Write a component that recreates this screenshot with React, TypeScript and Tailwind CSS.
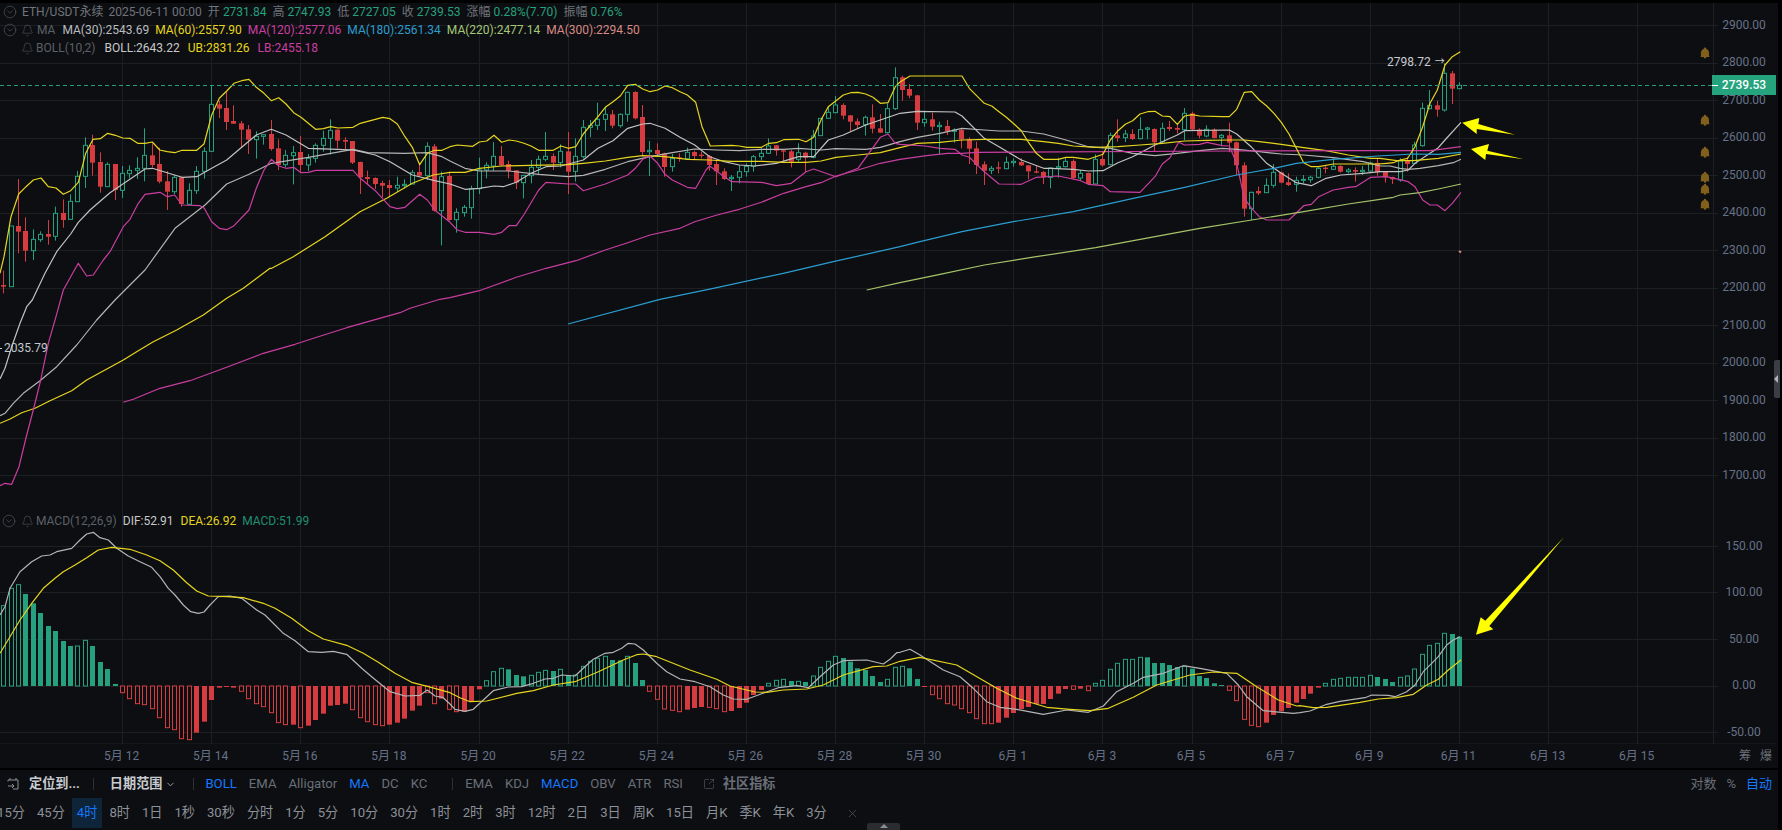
import { Bell, ChevronDown, CircleChevronDown, SquareArrowOutUpRight, X } from "lucide-react";

const BG = "#0d0e11";
const GREEN = "#26a17f";
const RED = "#d63c3f";
const GRID = "#1d1f23";

// zoomed coordinates -> page coordinates
function pts(xOff: number, yOff: number, s: string) {
  return s.split(" ").map((p) => {
    const [a, b] = p.split(",").map(Number);
    return `${(xOff + a / 3).toFixed(1)},${(yOff + b / 3).toFixed(1)}`;
  });
}

const candleChunks: [number, string][] = [
  [60, "r632,675,680,700 g498,498,680,680 r357,498,515,580 r472,513,572,605 g508,538,572,600 g514,523,539,546 r480,522,530,554 g440,460,529,542 r418,459,480,503 g403,424,478,480 g333,349,425,425 g232,256,349,384 r224,255,308,347 r277,306,380,398 g307,313,380,380 r312,312,390,420 g318,340,391,414 g316,331,341,355 g292,325,331,357 g205,286,325,364 r250,286,315,322 r263,312,365,370 r333,364,395,450 g345,352,395,402 r350,352,432,440 g370,391,433,435 g318,334,392,402 g262,274,334,356 g76,133,274,276 r122,133,146,174 r95,144,186,210 r136,183,191,192 r183,190,209,262 r195,208,239,282 g214,229,239,296 g222,224,229,254 r180,222,267,272 r238,265,315,330 g270,286,314,322 g258,278,287,373 r228,276,315,335 g282,295,315,333 g250,256,295,308 g212,235,256,275 g178,211,235,284 r208,209,242,265 r232,240,245,268 r243,243,308,312 r305,306,352,402 r332,351,357,375 r352,354,372,387 r362,369,377,412 r360,375,384,410 g350,376,384,396 g358,373,377,385 g330,338,372,372 r315,336,347,350 g247,259,347,360 r252,259,452,455 g335,350,452,556 r335,348,480,482"],
  [60, "g445,457,479,518 g435,442,458,470 g377,386,443,476 g293,330,386,402 g307,316,330,355 g246,289,318,333 r258,288,316,318 r302,312,333,355 r330,331,368,387 g345,346,368,415 g300,322,347,370 g287,298,322,345 g216,289,298,304 r280,288,308,330 g253,274,308,322 r216,274,335,402 g235,289,334,365 g180,202,290,295 g180,196,202,232 g128,178,196,210 g140,163,178,213 r150,163,197,205 g160,163,197,203 g95,97,163,185 r94,96,175,178 r135,171,276,288 g243,271,275,348 r250,270,282,290 r278,280,321,350 g282,296,320,335 r280,292,294,305 g263,277,296,298 r272,276,288,298 r275,284,288,295 r285,288,315,332 r302,312,334,375 r325,334,357,360 g345,352,356,393 g315,335,352,370 g310,319,335,350 g285,290,319,335 g265,280,290,300 g235,258,280,282 r255,256,272,287 r268,271,275,305 r270,274,305,322 g250,278,298,305 r275,278,293,335 g210,228,292,295 g175,175,227,228 g140,157,175,175 g108,135,158,160 r130,135,167,178 r165,166,185,215 r175,184,195,207 g167,172,194,227 r133,172,206,220 r162,205,218,218 g130,146,218,220 g22,53,146,150"],
  [60, "r47,52,90,122 r72,87,107,115 r105,106,188,210 g152,178,188,200 r158,178,200,212 g185,196,200,283 r180,198,214,225 g205,210,214,248 r205,210,238,265 r232,238,266,312 r245,265,315,342 r304,313,332,375 g318,325,331,342 r305,322,326,340 g290,307,326,328 g295,304,308,320 r295,306,316,318 r315,316,334,358 r318,334,338,340 r333,336,352,372 g322,324,352,385 g293,320,324,353 g295,304,320,322 r298,303,354,360 g330,340,354,362 r338,339,372,375 g283,298,372,372 r275,297,316,320 g218,226,314,316 r178,226,234,245 g210,222,233,246 r208,222,237,240 g172,209,236,238 g200,204,208,238 r205,207,247,275 g188,205,245,250 r183,201,207,213 r190,204,209,220 g144,160,209,240 r155,160,208,210 r205,209,227,235 g196,208,228,232 r205,209,234,235 g222,226,232,255 r188,226,248,277 r245,247,316,345 r307,316,446,470 g395,397,446,480 r380,393,400,405 g355,376,398,398 g312,337,376,383 r335,337,368,370 r340,367,375,378 g350,361,373,395 g345,358,361,370 g347,352,359,368 g322,325,352,355 r318,323,327,340 g295,319,328,330 r316,318,335,338 g324,330,335,340 r322,330,335,365 g318,331,335,345 g305,309,333,335 r295,309,337,347 r335,336,352,368 r350,351,358,372"],
  [0, "g475,483,540,545 r470,481,492,515 g425,435,490,490 g308,325,437,440 g270,316,326,328 r302,316,329,350 g190,220,330,335 r213,220,266,312 g247,256,266,268"],
];

const barChunks: [number, string][] = [
  [510, "h287 h235 h224 f252 f280 f309 f348 f363 f393 f408 h408 h391 f408 f456 f477 f522 h548 h566 h581 h584 h596 h623 h653 h659 h686 h689 f668 f635 f570 f533 f531 f533 h544 h566 h581 h590 h608 h638 h644 f644 h653 f647 f630 f611 f587 f585 f581 h599 h623 h635 h644 h647 f644 f638 f626 f602 f587 h548 h581 f566 h598"],
  [620, "h275 f275 f245 f208 h182 h155 h145 f148 f165 f169 h166 h157 h151 f153 h148 f165 h165 h139 h124 h115 h109 f120 f121 h109 f129 f180 h214 h238 h267 h271 h275 f269 f264 f261 h262 h266 h275 f273 f264 f248 f225 f210 h190 h181 h178 f183 h184 f186 h168 h142 h124 h109 f114 f125 f145 f150 f168 f186 h178 h142"],
  [620, "h139 f145 f177 f201 h224 h236 h251 h255 h266 h278 h296 h311 h311 f308 f293 f279 f267 f261 f252 f252 f237 f221 f207 h208 f206 h212 h190 h181 h148 h130 h118 h118 h112 f112 f129 f129 f135 f141 h139 f146 f168 f174 f190 f195 h211 h242 h298 h316 h320 f308 f285 f274 f264 f248 f237 f221 f203 h190 h178 h175 h172 h172 h172 h166 f171 f177 f186"],
  [620, "h172 h168 h147 h103 h76 h70 h40 f42 f50"],
];

const N = 197;
const candleX = (i: number) => Math.round(1459 - 7.4275 * (N - 1 - i));

const candles = candleChunks.flatMap(([yOff, s]) =>
  s.split(" ").map((t) => {
    const [a, b, c, d] = t.slice(1).split(",").map((v) => yOff + Number(v) / 3);
    return { red: t[0] === "r", wt: a, bt: b, bb: c, wb: d };
  }),
);

const bars = barChunks.flatMap(([yOff, s]) =>
  s.split(" ").map((t) => ({ hollow: t[0] === "h", y: yOff + Number(t.slice(1)) / 3 })),
);

const lines: { color: string; w?: number; points: string[] }[] = [
  {
    color: "#b4b4b4",
    points: [
      ...pts(0, 260, "0,467 15,460 40,430 70,400 120,362 170,320 230,255 290,180 345,120"),
      ...pts(0, 60, "345,720 435,630 525,505 615,435 680,372 747,343 814,310 925,292 1059,268 1103,278 1215,280 1282,278 1326,290 1350,303"),
      ...pts(450, 60, "45,325 88,333 177,333 266,343 355,350 400,346 466,328 533,305 600,290 667,278 734,267 800,270 868,272 934,268 1001,268 1046,265 1113,270 1157,266 1247,268 1291,262 1350,245"),
      ...pts(900, 60, "52,232 120,220 186,205 253,210 297,213 364,213 431,222 498,240 565,260 631,265 698,280 765,287 832,280 899,272 966,265 1010,268 1078,275 1144,282 1211,285 1300,293 1390,305"),
      ...pts(1380, 0, "0,498 30,498 60,505 85,508 120,505 175,497 220,488 243,478"),
    ],
  },
  {
    color: "#c2c2c2",
    points: [
      ...pts(0, 260, "0,357 15,325 35,260 60,190 80,140 97,120"),
      ...pts(0, 60, "97,720 135,640 170,575 212,522 235,487 270,450 330,398 435,327 457,325 546,352 590,350 635,325 680,300 725,262 769,225 814,208 858,225 925,265 1014,268 1059,270 1126,285 1170,305 1237,345 1304,362 1350,372"),
      ...pts(450, 60, "45,388 88,385 132,378 160,380 199,367 243,340 288,320 333,318 400,300 444,265 489,242 533,205 578,192 600,190 645,205 690,232 734,255 779,290 823,305 868,315 912,318 979,310 1046,290 1091,290 1135,240 1180,225 1247,195 1291,180 1350,160"),
      ...pts(900, 60, "52,154 165,156 186,168 253,235 297,260 364,300 431,325 453,325 520,328 565,333 609,332 654,308 698,290 765,255 832,225 854,212 988,210 1010,222 1055,262 1100,310 1144,340 1189,368 1234,377 1278,355 1323,345 1390,340"),
      ...pts(1380, 0, "0,515 60,515 85,510 105,490 150,460 175,443 195,420 243,367"),
    ],
  },
  {
    color: "#e6d51f",
    points: [
      ...pts(0, 260, "0,490 30,477 65,458 105,445 150,422 215,392 260,360 370,300 415,272 460,245 530,210 610,165 680,115 730,85 810,25"),
      ...pts(0, 60, "815,625 880,590 975,530 1080,455 1160,415 1237,370 1300,345 1350,337"),
      ...pts(450, 60, "45,337 88,325 155,318 243,316 355,314 400,310 466,303 533,292 578,287 645,290 712,298 779,300 845,304 934,304 1001,307 1068,307 1113,303 1158,292 1224,285 1291,278 1350,263"),
      ...pts(900, 60, "52,250 120,247 186,240 253,238 364,238 431,245 475,250 520,258 587,262 654,260 720,255 787,250 854,243 921,241 988,240 1033,240 1078,245 1144,253 1211,263 1278,272 1345,285 1412,295"),
      ...pts(1380, 0, "0,475 50,482 100,482 175,475 243,462"),
    ],
  },
  {
    color: "#c93ea0",
    points: [
      ...pts(0, 260, "370,427 400,418 480,385 570,362 680,322 790,280 885,253 950,232 1040,203 1200,158 1230,145 1320,118 1350,113"),
      ...pts(450, 60, "88,692 199,652 288,625 378,602 466,570 533,548 600,525 690,505 734,485 801,465 868,448 934,427 1001,400 1068,380 1113,368 1158,348 1224,330 1291,310 1350,298"),
      ...pts(900, 60, "80,287 142,280 186,280 231,277 1000,273 1350,272"),
      ...pts(1380, 0, "0,452 150,452 243,440"),
    ],
  },
  {
    color: "#c93ea0",
    points: [
      ...pts(0, 260, "0,677 15,670 35,673 57,620 80,525 100,450 122,360 145,250 168,170 190,90 212,50 235,10 260,48 280,45 310,0"),
      ...pts(0, 60, "330,575 370,500 390,478 415,430 435,403 480,397 502,410 524,405 546,435 600,437 613,445 635,485 658,505 680,509 702,497 747,450 769,385 792,330 814,298 836,318 858,325 881,322 903,338 925,337 947,331 970,331 1059,331 1081,355 1126,392 1170,440 1192,446 1215,442 1259,403 1282,420 1304,450 1350,487"),
      ...pts(450, 60, "22,510 45,517 88,517 132,523 155,517 177,497 199,497 221,465 266,390 288,367 355,372 377,372 400,392 466,372 533,345 556,325 578,298 600,288 623,310 645,343 667,360 712,382 737,385 768,330 779,318 823,350 845,365 934,367 979,377 1024,370 1068,335 1091,327 1158,350 1224,325 1291,232 1314,222 1336,250 1350,253"),
      ...pts(900, 60, "75,258 120,265 165,268 186,285 208,292 253,335 297,372 364,373 409,352 475,348 542,362 565,373 609,377 631,395 720,397 765,350 787,312 810,293 836,247 854,255 899,253 921,247 966,257 988,258 1010,310 1033,415 1055,445 1078,470 1100,480 1167,480 1211,437 1234,433 1256,410 1300,390 1345,382 1367,380 1412,352 1457,350"),
      ...pts(1380, 0, "30,532 85,545 105,560 128,600 150,615 172,615 195,632 217,610 243,577"),
    ],
  },
  {
    color: "#e6d51f",
    points: [
      ...pts(0, 60, "0,640 12,590 33,470 56,402 78,380 100,360 123,354 145,380 168,384 190,403 212,392 235,367 257,280 279,238 301,236 323,220 346,226 368,234 390,235 413,250 435,250 457,246 479,270 502,275 524,278 546,271 590,271 612,252 635,165 658,115 680,93 702,70 725,62 747,58 769,82 792,100 814,122 836,113 858,132 881,158 903,172 925,190 947,208 970,206 992,200 1014,204 1059,202 1081,190 1103,184 1126,178 1148,172 1170,176 1192,192 1215,230 1237,262 1259,314 1282,280 1304,271 1326,271 1350,260"),
      ...pts(450, 60, "22,255 68,259 88,246 110,243 132,226 155,247 177,240 199,243 222,250 243,258 266,271 310,271 333,258 355,265 377,260 400,222 422,195 444,170 466,142 489,125 511,108 533,76 556,73 578,87 600,95 623,90 645,78 667,83 690,95 712,105 737,127 756,200 781,258 845,256 868,258 890,262 934,262 957,250 979,248 1001,239 1046,238 1068,245 1091,232 1113,180 1135,140 1158,122 1180,105 1202,98 1224,97 1247,102 1269,112 1291,130 1314,128 1336,80 1350,66"),
      ...pts(900, 60, "30,48 186,48 208,85 253,130 275,138 297,155 319,172 342,192 364,212 386,248 409,280 431,298 475,298 498,292 520,292 565,298 609,283 631,240 654,212 676,193 698,182 720,162 743,155 765,154 787,168 810,170 832,193 854,168 876,164 899,168 966,170 988,170 1010,148 1033,97 1055,95 1078,120 1100,138 1122,160 1144,187 1167,222 1189,265 1211,308 1234,320 1256,320 1300,312 1434,312"),
      ...pts(1380, 0, "20,490 40,488 60,480 83,475 105,440 128,380 150,310 172,270 195,195 217,170 241,155"),
    ],
  },
  {
    color: "#2a9ed0",
    points: [
      ...pts(450, 60, "354,792 630,718 790,685 1000,640 1150,605 1350,560"),
      ...pts(900, 60, "60,545 186,515 340,485 520,455 700,415 854,382 1010,345 1122,325 1189,310 1300,298 1434,288"),
      ...pts(1380, 0, "100,462 175,463 243,457"),
    ],
  },
  {
    color: "#a5c46a",
    points: [
      ...pts(450, 60, "1250,690 1350,668"),
      ...pts(900, 60, "120,643 253,615 409,590 587,563 765,530 899,505 1055,480 1211,455 1345,432"),
      ...pts(1380, 0, "0,598 40,592 60,585 120,578 175,567 243,552"),
    ],
  },
  { color: "#d88a88", w: 2, points: ["1459,251 1461,252.5"] },
  // MACD DIF
  {
    color: "#b4b4b4",
    points: [
      ...pts(0, 510, "0,315 15,290 30,235 60,185 95,155 125,138 150,135 170,125 215,115 240,90 260,72 280,67 300,83 325,90 350,115 385,138 420,155 455,172 480,200 505,235 525,255 550,285 572,305 595,310 612,306 630,285 655,260 690,258 725,265 770,300 795,315 825,345 850,370 885,392 925,425 965,427 1000,424 1040,433 1085,475 1115,500 1170,545 1215,558 1260,556 1282,540 1305,558 1328,562"),
      ...pts(450, 620, "0,252 15,268 45,274 70,268 100,240 130,212 175,201 215,200 250,190 285,177 310,175 335,165 375,168 400,145 430,118 465,100 490,97 515,85 535,70 555,72 580,90 620,130 650,155 690,177 735,185 780,200 820,225 850,237 890,238 925,225 985,203 1040,197 1075,203 1110,170 1150,135 1180,122 1250,120 1300,132 1320,118 1340,98"),
      ...pts(900, 620, "0,97 30,88 60,105 130,150 180,170 220,205 260,245 300,262 350,268 430,283 500,270 565,277 610,258 650,215 700,190 730,172 790,160 850,137 900,145 980,160 1015,195 1040,230 1090,272 1180,280"),
      ...pts(1300, 520, "0,578 30,573 80,553 120,544 195,533 215,525 265,526 285,530 320,515 345,495 370,455 395,430 415,410 440,375 460,360 480,350"),
    ],
  },
  // MACD DEA
  {
    color: "#e6d51f",
    points: [
      ...pts(0, 510, "0,430 30,380 60,330 95,280 130,235 165,205 190,185 225,165 260,143 295,120 335,112 390,118 440,135 480,152 520,180 560,218 590,243 625,258 680,260 730,263 790,280 825,295 875,325 925,362 970,387 1040,406 1090,430 1135,457 1185,490 1235,517 1285,530"),
      ...pts(450, 620, "0,218 30,233 60,245 110,243 200,220 250,212 310,195 375,185 445,155 520,120 560,104 580,102 620,110 720,150 800,178 840,198 915,216 950,217 1000,210 1070,207 1120,195 1180,165 1270,140 1310,138"),
      ...pts(900, 620, "0,124 60,112 170,135 290,205 350,235 440,262 510,268 570,272 625,265 700,232 770,195 870,165 940,156 1010,160 1070,200 1135,240 1190,258"),
      ...pts(1300, 520, "0,557 40,563 80,562 180,547 235,537 290,533 340,523 380,495 415,478 445,450 483,420"),
    ],
  },
];

const arrows = [
  pts(1380, 0, "247,368 298,354 295,372 405,404 290,387 290,402"),
  pts(1380, 0, "273,447 327,432 322,452 432,478 318,462 316,480"),
  pts(1300, 520, "528,344 542,292 556,302 793,50 568,318 580,328"),
];

const priceLabels = [2900, 2800, 2700, 2600, 2500, 2400, 2300, 2200, 2100, 2000, 1900, 1800, 1700];
const macdLabels = ["150.00", "100.00", "50.00", "0.00", "-50.00"];
const gridY = [
  ...priceLabels.map((p) => 25 + (2900 - p) * 0.375),
  546, 592, 639, 686, 732,
];
const gridX = [...Array.from({ length: 18 }, (_, k) => 122 + 89.13 * k), 1712.7];
const dates = [
  "5月 12", "5月 14", "5月 16", "5月 18", "5月 20", "5月 22", "5月 24", "5月 26", "5月 28", "5月 30",
  "6月 1", "6月 3", "6月 5", "6月 7", "6月 9", "6月 11", "6月 13", "6月 15",
];
const bellsY = [52.7, 120, 152, 177, 189, 204];

const indicatorsA = ["BOLL", "EMA", "Alligator", "MA", "DC", "KC"];
const indicatorsB = ["EMA", "KDJ", "MACD", "OBV", "ATR", "RSI"];
const active = ["BOLL", "MA", "MACD"];
const periods = ["15分", "45分", "4时", "8时", "1日", "1秒", "30秒", "分时", "1分", "5分", "10分", "30分", "1时", "2时", "3时", "12时", "2日", "3日", "周K", "15日", "月K", "季K", "年K", "3分"];

function Chart() {
  return (
    <svg className="block h-[741px] w-[1778px]" viewBox="0 3 1778 741">
      {gridX.map((x) => (
        <line key={x} x1={Math.round(x) + 0.5} x2={Math.round(x) + 0.5} y1={3} y2={744} stroke={GRID} />
      ))}
      {gridY.map((y) => (
        <line key={y} x1={0} x2={1718} y1={Math.round(y) + 0.5} y2={Math.round(y) + 0.5} stroke={GRID} />
      ))}
      <line x1={0} x2={1776} y1={744} y2={744} stroke={GRID} />

      {candles.map((c, i) => {
        const x = candleX(i);
        const color = c.red ? RED : GREEN;
        return (
          <g key={i}>
            <line x1={x + 0.5} x2={x + 0.5} y1={c.wt} y2={c.wb} stroke={color} />
            {c.red ? (
              <rect x={x - 2} y={c.bt} width={5} height={Math.max(c.bb - c.bt, 1)} fill={color} />
            ) : (
              <rect x={x - 1.5} y={c.bt} width={4} height={Math.max(c.bb - c.bt, 1)} fill={BG} stroke={color} />
            )}
          </g>
        );
      })}

      {bars.map((b, i) => {
        const x = candleX(i);
        const up = b.y < 686;
        const color = up ? GREEN : RED;
        const top = Math.min(b.y, 686);
        const h = Math.max(Math.abs(b.y - 686), 1);
        return b.hollow ? (
          <rect key={i} x={x - 1.5} y={top} width={4} height={h} fill={BG} stroke={color} />
        ) : (
          <rect key={i} x={x - 2} y={top} width={5} height={h} fill={color} />
        );
      })}

      {lines.map((l, i) => (
        <polyline key={i} points={l.points.join(" ")} fill="none" stroke={l.color} strokeWidth={l.w ?? 1.2} strokeLinejoin="round" />
      ))}

      <line x1={0} x2={1712} y1={85.5} y2={85.5} stroke={GREEN} strokeDasharray="4 3" />
      <line x1={0} x2={2} y1={348.5} y2={348.5} stroke="#c0c8d0" />

      {arrows.map((a, i) => (
        <polygon key={i} points={a.join(" ")} fill="#ffff00" />
      ))}

      {bellsY.map((y) => (
        <g key={y} transform={`translate(1705 ${y})`} fill="#80601a">
          <path d="M-4 3 C-4.4 -1 -3.6 -4 0 -4 C3.6 -4 4.4 -1 4 3 L4.6 4.2 L-4.6 4.2 Z" />
          <circle cx={0} cy={-4} r={1.2} />
          <circle cx={0} cy={4.4} r={1.3} />
        </g>
      ))}
    </svg>
  );
}

function Pair({ k, v, className = "text-[#26a17f]" }: { k: string; v: string; className?: string }) {
  return (
    <div className="flex gap-[3px]">
      <span className="text-[#70747c]">{k}</span>
      <span className={className}>{v}</span>
    </div>
  );
}

function Legend() {
  return (
    <div className="absolute left-[3px] top-0 text-[12px] leading-[18px]">
      <div className="flex h-[18px] items-center">
        <CircleChevronDown size={14} strokeWidth={1} className="text-[#5c6068]" />
        <span className="ml-[5px] text-[#70747c]">ETH/USDT永续</span>
        <span className="ml-[5px] text-[#70747c]">2025-06-11 00:00</span>
        <div className="ml-[6px] flex gap-[6px]">
          <Pair k="开" v="2731.84" />
          <Pair k="高" v="2747.93" />
          <Pair k="低" v="2727.05" />
          <Pair k="收" v="2739.53" />
          <Pair k="涨幅" v="0.28%(7.70)" />
          <Pair k="振幅" v="0.76%" />
        </div>
      </div>
      <div className="flex h-[18px] items-center">
        <CircleChevronDown size={14} strokeWidth={1} className="text-[#5c6068]" />
        <Bell size={13} strokeWidth={1} className="ml-[4px] text-[#5c6068]" />
        <span className="ml-[3px] text-[#5c6068]">MA</span>
        <div className="ml-[7px] flex gap-[6px]">
          <span className="text-[#b8bcc0]">MA(30):2543.69</span>
          <span className="text-[#e6d51f]">MA(60):2557.90</span>
          <span className="text-[#c93ea0]">MA(120):2577.06</span>
          <span className="text-[#2a9ed0]">MA(180):2561.34</span>
          <span className="text-[#a5c878]">MA(220):2477.14</span>
          <span className="text-[#d88a88]">MA(300):2294.50</span>
        </div>
      </div>
      <div className="flex h-[18px] items-center pl-[18px]">
        <Bell size={13} strokeWidth={1} className="text-[#5c6068]" />
        <span className="ml-[2px] text-[#5c6068]">BOLL(10,2)</span>
        <div className="ml-[9px] flex gap-[8px]">
          <span className="text-[#c8c8c8]">BOLL:2643.22</span>
          <span className="text-[#e6d51f]">UB:2831.26</span>
          <span className="text-[#c93ea0]">LB:2455.18</span>
        </div>
      </div>
    </div>
  );
}

function MacdLegend() {
  return (
    <div className="absolute left-[2px] top-[509px] flex h-[18px] items-center text-[12px]">
      <CircleChevronDown size={14} strokeWidth={1} className="text-[#5c6068]" />
      <Bell size={13} strokeWidth={1} className="ml-[5px] text-[#5c6068]" />
      <span className="ml-[2px] text-[#5c6068]">MACD(12,26,9)</span>
      <span className="ml-[6px] text-[#c8c8c8]">DIF:52.91</span>
      <span className="ml-[7px] text-[#e6d51f]">DEA:26.92</span>
      <span className="ml-[6px] text-[#1f8f70]">MACD:51.99</span>
    </div>
  );
}

function PriceAxis() {
  return (
    <div className="absolute left-[1712px] top-0 flex w-[64px] flex-col pt-[3px] text-center text-[12px] text-[#667289]">
      {priceLabels.map((p) => (
        <div key={p} className="flex h-[37.5px] items-center justify-center">{p}.00</div>
      ))}
      <div className="mt-[29px]">
        {macdLabels.map((m) => (
          <div key={m} className="flex h-[46.5px] items-center justify-center">{m}</div>
        ))}
      </div>
    </div>
  );
}

export default function App() {
  return (
    <div className="h-[830px] w-[1782px] overflow-hidden bg-black pt-[3px] font-['Roboto','Noto_Sans_CJK_SC',sans-serif]">
      <div className="relative h-[827px] w-[1778px] bg-[#0d0e11]">
        <div className="relative h-[741px]">
          <Chart />
          <Legend />
          <MacdLegend />
          <PriceAxis />
          <div className="absolute left-[1712px] top-[72px] flex h-[20px] w-[64px] items-center justify-center bg-[#24a37c] text-[12px] font-medium text-white">
            <span className="absolute left-0 top-[10px] h-px w-[6px] bg-white" />
            2739.53
          </div>
          <div className="absolute left-[1387px] top-[50px] flex items-center gap-[4px] text-[12px] leading-[18px] text-[#c8ccd0]">
            <span>2798.72</span>
            <span className="text-[10px]">→</span>
          </div>
          <div className="absolute left-[4px] top-[336px] text-[12px] leading-[18px] text-[#c0c8d0]">2035.79</div>
          <div className="absolute left-[1774px] top-[357px] flex h-[38px] w-[6px] items-center rounded-l-[2px] bg-[#3a3d44]">
            <span className="h-0 w-0 border-y-[4px] border-r-[4px] border-y-transparent border-r-[#b0b4ba]" />
          </div>
        </div>

        <div className="flex h-[24px] items-center pl-[77px] pr-[6px] pb-[1px] text-[12px] text-[#667289]">
          {dates.map((d) => (
            <div key={d} className="w-[89.13px] text-center">{d}</div>
          ))}
          <div className="ml-auto flex gap-[9px] text-[#6a6e78]">
            <span>筹</span>
            <span>爆</span>
          </div>
        </div>
        <div className="h-[2px] bg-black" />

        <div className="flex h-[28px] items-center text-[13.15px] text-[#6a6e78]">
          <svg className="ml-[7px] text-[#8a8e96]" width="13" height="14" viewBox="0 0 13 14" fill="none" stroke="currentColor" strokeWidth="1">
            <path d="M3 1v2M9 1v2M1 4.5V3h10v9H6M1 9h6M5 7l2 2-2 2" />
          </svg>
          <span className="ml-[9px] font-bold text-[#c8ccd0]">定位到...</span>
          <div className="ml-[13px] h-[12px] w-px bg-[#2e3036]" />
          <span className="ml-[16px] font-bold text-[#c8ccd0]">日期范围</span>
          <ChevronDown size={11} className="ml-[3px] text-[#a0a4aa]" />
          <div className="ml-[17px] h-[12px] w-px bg-[#2e3036]" />
          <div className="ml-[11px] flex gap-3">
            {indicatorsA.map((n) => (
              <span key={n} className={active.includes(n) ? "text-[#1677ff]" : ""}>{n}</span>
            ))}
          </div>
          <div className="ml-[25px] h-[12px] w-px bg-[#2e3036]" />
          <div className="ml-[12px] flex gap-3">
            {indicatorsB.map((n) => (
              <span key={n} className={active.includes(n) ? "text-[#1677ff]" : ""}>{n}</span>
            ))}
          </div>
          <SquareArrowOutUpRight size={12} strokeWidth={1} className="ml-[20px]" />
          <span className="ml-[8px] font-bold">社区指标</span>
          <div className="ml-auto flex gap-[10px] pr-[6px] text-[13px]">
            <span>对数</span>
            <span>%</span>
            <span className="text-[#1677ff]">自动</span>
          </div>
        </div>

        <div className="-ml-[3px] flex h-[30px] items-center gap-3 text-[13.15px] text-[#8c9098]">
          {periods.map((p) =>
            p === "4时" ? (
              <span key={p} className="-mx-[5px] flex h-[30px] items-center bg-[#0e2438] px-[5px] text-[#1677ff]">{p}</span>
            ) : (
              <span key={p}>{p}</span>
            ),
          )}
          <X size={13} strokeWidth={1} className="ml-[7px] text-[#6a6e78]" />
        </div>

        <div className="absolute bottom-0 left-[867px] flex h-[7px] w-[33px] items-start justify-center rounded-t-[2px] bg-[#2a2c30]">
          <span className="mt-[1px] h-0 w-0 border-x-[4px] border-b-[4px] border-x-transparent border-b-[#8a8e96]" />
        </div>
      </div>
    </div>
  );
}
